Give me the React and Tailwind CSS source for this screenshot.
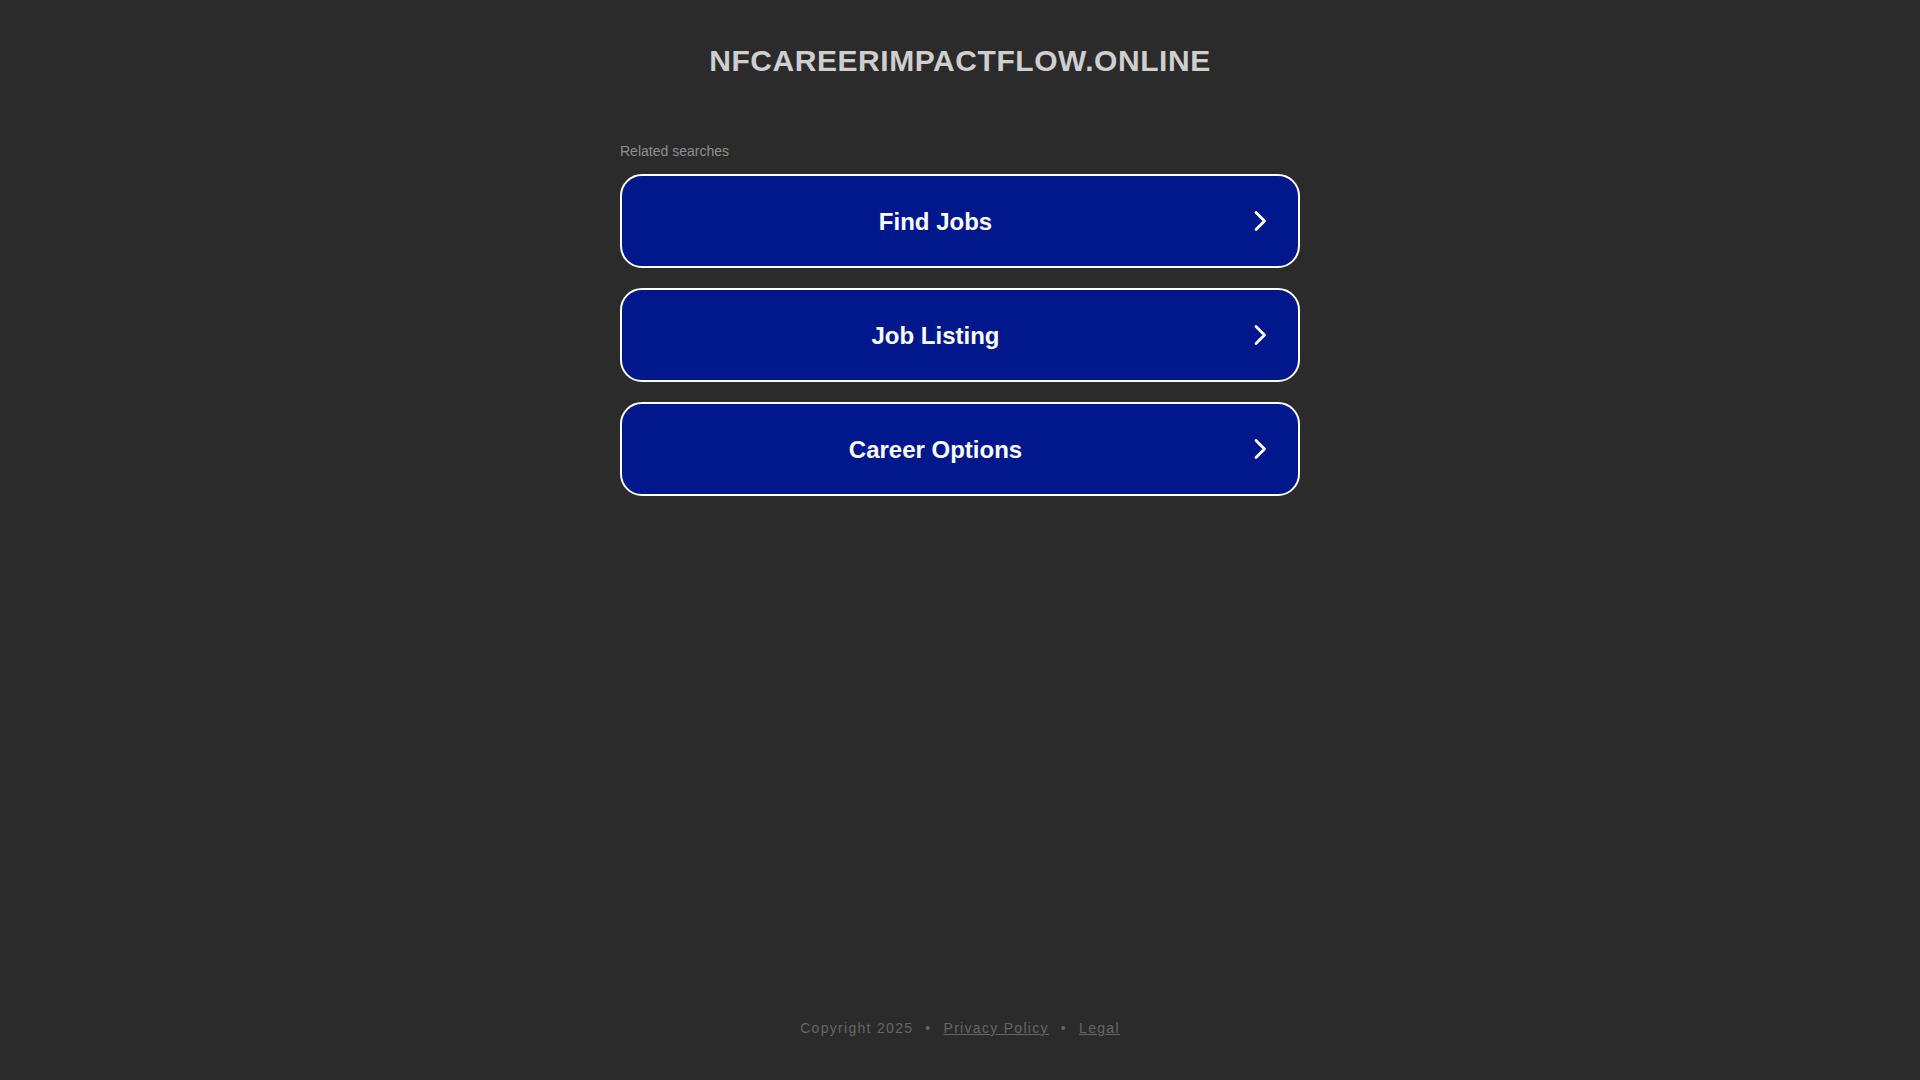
import React from "react";

const searches = ["Find Jobs", "Job Listing", "Career Options"];

const Chevron = () => (
  <svg width="24" height="24" viewBox="0 0 24 24" fill="none" className="shrink-0">
    <path
      d="M7 3.5 L15.5 12 L7 20.5"
      stroke="#ffffff"
      strokeWidth="2.8"
      strokeLinecap="round"
      strokeLinejoin="round"
    />
  </svg>
);

const SearchButton = ({ label }) => (
  <a
    href="#"
    className="flex items-center h-[94px] w-full rounded-[22px] border-2 border-white bg-[#00188c] pr-[25px]"
  >
    <span className="flex-1 text-center text-[24px] font-bold text-white leading-none pt-[2px]">
      {label}
    </span>
    <Chevron />
  </a>
);

export default function App() {
  return (
    <div
      className="min-h-screen flex flex-col items-center bg-[#2b2b2b]"
      style={{ fontFamily: '"Liberation Sans", Arial, sans-serif' }}
    >
      <h1 className="pt-[43px] text-[30px] leading-[36px] font-bold tracking-[0.55px] text-[#cfcfcf]">
        NFCAREERIMPACTFLOW.ONLINE
      </h1>

      <div className="w-[680px] mt-[63px]">
        <p className="text-[14px] leading-[18px] text-[#8f8f8f]">Related searches</p>
        <div className="mt-[14px] flex flex-col gap-[20px]">
          {searches.map((s) => (
            <SearchButton key={s} label={s} />
          ))}
        </div>
      </div>

      <footer className="mt-auto mb-[42px] flex items-center text-[14px] leading-[20px] tracking-[1.3px] text-[#666666]">
        <span>Copyright 2025</span>
        <span className="mx-3">•</span>
        <a href="#" className="underline">Privacy Policy</a>
        <span className="mx-3">•</span>
        <a href="#" className="underline">Legal</a>
      </footer>
    </div>
  );
}
